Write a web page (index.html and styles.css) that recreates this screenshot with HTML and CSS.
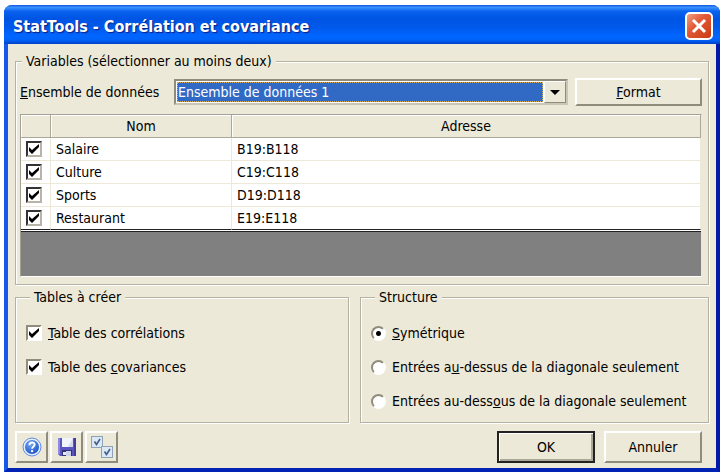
FILE: index.html
```html
<!DOCTYPE html>
<html lang="fr">
<head>
  <meta charset="UTF-8">
  <meta name="viewport" content="width=device-width, initial-scale=1.0">
  <title>StatTools - Corrélation et covariance</title>
  <link rel="stylesheet" href="styles.css">
</head>
<body>
  <form class="window">
    <header class="titlebar">
      <h1>StatTools - Corrélation et covariance</h1>
      <button type="button" class="close" aria-label="Fermer">
        <svg viewBox="0 0 24 24" width="24" height="24"><path d="M6 6L18 18M18 6L6 18"/></svg>
      </button>
    </header>

    <div class="content">
      <fieldset class="variables">
        <legend>Variables (sélectionner au moins deux)</legend>
        <div class="dataset">
          <label for="dataset"><u>E</u>nsemble de données</label>
          <div class="combo">
            <select id="dataset">
              <option>Ensemble de données 1</option>
            </select>
            <span class="arrow"></span>
          </div>
          <button type="button" class="format"><u>F</u>ormat</button>
        </div>
        <div class="grid">
          <table>
            <colgroup>
              <col class="col-check">
              <col class="col-name">
              <col>
            </colgroup>
            <thead>
              <tr><th></th><th>Nom</th><th>Adresse</th></tr>
            </thead>
            <tbody>
              <tr>
                <td><input type="checkbox" id="v1" checked></td>
                <td><label for="v1">Salaire</label></td>
                <td>B19:B118</td>
              </tr>
              <tr>
                <td><input type="checkbox" id="v2" checked></td>
                <td><label for="v2">Culture</label></td>
                <td>C19:C118</td>
              </tr>
              <tr>
                <td><input type="checkbox" id="v3" checked></td>
                <td><label for="v3">Sports</label></td>
                <td>D19:D118</td>
              </tr>
              <tr>
                <td><input type="checkbox" id="v4" checked></td>
                <td><label for="v4">Restaurant</label></td>
                <td>E19:E118</td>
              </tr>
            </tbody>
          </table>
        </div>
      </fieldset>

      <div class="options">
        <fieldset class="choices">
          <legend>Tables à créer</legend>
          <label><input type="checkbox" checked><span><u>T</u>able des corrélations</span></label>
          <label><input type="checkbox" checked><span>Table des <u>c</u>ovariances</span></label>
        </fieldset>
        <fieldset class="choices">
          <legend>Structure</legend>
          <label><input type="radio" name="structure" checked><span><u>S</u>ymétrique</span></label>
          <label><input type="radio" name="structure"><span>Entrées a<u>u</u>-dessus de la diagonale seulement</span></label>
          <label><input type="radio" name="structure"><span>Entrées au-dess<u>o</u>us de la diagonale seulement</span></label>
        </fieldset>
      </div>

      <footer class="actions">
        <button type="button" class="tool" aria-label="Aide">
          <svg viewBox="0 0 20 20" width="20" height="20">
            <defs>
              <radialGradient id="help" cx="40%" cy="30%" r="75%">
                <stop offset="0" stop-color="#6fa8f5"/>
                <stop offset="1" stop-color="#1c4fc4"/>
              </radialGradient>
            </defs>
            <circle cx="10" cy="10" r="9" fill="#e4eefc" stroke="#5c8be0"/>
            <circle cx="10" cy="10" r="7" fill="url(#help)"/>
            <path d="M7.4 8.2C7.4 4.6 12.8 4.8 12.6 7.8C12.5 9.5 10.2 9.6 10.1 11.8" fill="none" stroke="#fff" stroke-width="1.9"/>
            <circle cx="10.1" cy="14.1" r="1.2" fill="#fff"/>
          </svg>
        </button>
        <button type="button" class="tool" aria-label="Enregistrer">
          <svg viewBox="0 0 20 20" width="20" height="20">
            <path d="M1 1H19V19H3L1 17Z" fill="#5a55c0"/>
            <path d="M1 1H3V17H1Z" fill="#8d8be0"/>
            <path d="M17 1H19V19H17Z" fill="#443c9c"/>
            <rect x="5" y="1" width="11" height="9" fill="#f2f4fc"/>
            <path d="M16 1V10H11Z" fill="#d3d8ee"/>
            <rect x="5" y="13" width="10" height="6" fill="#34307c"/>
            <rect x="9" y="14" width="5" height="5" fill="#cfd3ea"/>
            <rect x="6" y="15" width="3" height="3" fill="#e8eaf6"/>
          </svg>
        </button>
        <button type="button" class="tool" aria-label="Tout sélectionner">
          <svg viewBox="0 0 22 22" width="22" height="22">
            <g fill="#dce8f5" stroke="#8fa3b8">
              <rect x=".5" y=".5" width="11" height="11"/>
              <rect x="10.5" y="10.5" width="11" height="11"/>
            </g>
            <path d="M3.5 5.5L5.5 8.5L9 3M13.5 15.5L15.5 18.5L19 13" fill="none" stroke="#3f5f8c" stroke-width="1.6"/>
          </svg>
        </button>
        <button type="submit" class="ok">OK</button>
        <button type="button" class="cancel">Annuler</button>
      </footer>
    </div>
  </form>
</body>
</html>
```
FILE: styles.css
```css
* {
  box-sizing: border-box;
}

body {
  margin: 0;
  padding: 5px 0 0 4px;
  background-color: #fff;
  color: #000;
  font-family: 'DejaVu Sans Condensed', 'DejaVu Sans', sans-serif;
  font-stretch: condensed;
  font-size: 14px;
  line-height: 16px;
}

.window {
  border: 4px solid #0a3fd6;
  border-color: #0831d9 #0019a8 #0023b4 #1658e8;
  border-top: 0;
  border-radius: 8px 8px 0 0;
  background-color: #ece9d8;
}

.titlebar {
  display: flex;
  align-items: center;
  justify-content: space-between;
  height: 39px;
  margin: 0 -4px;
  padding: 0 7px 0 9px;
  border-radius: 8px 8px 0 0;
  background: linear-gradient(#0a56dc 0, #3c93ff 6%, #0a62ee 16%, #0054e3 35%, #0058ea 55%, #0066ff 80%, #0062f8 90%, #0040c8 100%);
}

.titlebar h1 {
  margin: 4px 0 0;
  color: #fff;
  font-size: 16px;
  line-height: 20px;
  text-shadow: 1px 1px 1px #0a1f80;
}

button {
  padding: 0;
  border: 2px solid;
  border-color: #fff #8f8c7c #8f8c7c #fff;
  background-color: #ece9d8;
  color: #000;
  font: inherit;
}

.close {
  display: flex;
  align-items: center;
  justify-content: center;
  width: 28px;
  height: 28px;
  margin-top: 3px;
  border: 2px solid #fff;
  border-radius: 5px;
  background: linear-gradient(135deg, #f0a084, #e25a37 40%, #c93a12);
}

.close path {
  fill: none;
  stroke: #fff;
  stroke-width: 3;
}

.content {
  padding: 9px 7px 5px;
}

fieldset {
  min-width: 0;
  margin: 0;
  border: 1px solid #b5b2a2;
  box-shadow: 1px 1px 0 #fff, inset 1px 1px 0 #fff;
}

legend {
  padding: 0 4px;
  background-color: #ece9d8;
}

.variables {
  padding: 9px 6px 7px 4px;
}

.variables legend {
  margin-left: 2px;
}

.dataset {
  display: flex;
  align-items: center;
  margin-bottom: 8px;
}

.dataset label {
  width: 154px;
}

.combo {
  display: flex;
  flex: 1;
  height: 26px;
  border: 2px solid;
  border-color: #8f8c7c #c9c6b6 #c9c6b6 #8f8c7c;
  background-color: #fff;
}

.combo select {
  flex: 1;
  min-width: 0;
  margin: 1px;
  padding: 0;
  appearance: none;
  border: 1px dotted #d8b060;
  border-radius: 0;
  outline: none;
  background-color: #316ac5;
  color: #fff;
  font: inherit;
}

.arrow {
  display: flex;
  align-items: center;
  justify-content: center;
  width: 22px;
  border: 1px solid;
  border-color: #fff #8f8c7c #8f8c7c #fff;
  background-color: #ece9d8;
  pointer-events: none;
}

.arrow::before {
  content: '';
  border: 5px solid transparent;
  border-top-color: #000;
  border-bottom: 0;
}

.format {
  width: 127px;
  height: 28px;
  margin-left: 7px;
}

.grid {
  min-height: 163px;
  border: 1px solid;
  border-color: #a5a295 #ece9d8 #fff #a5a295;
  background-color: #808080;
}

table {
  width: 100%;
  table-layout: fixed;
  border-spacing: 0;
  border-bottom: 2px solid #222;
  background-color: #fff;
}

.col-check {
  width: 30px;
}

.col-name {
  width: 181px;
}

th {
  height: 23px;
  padding: 0;
  border-right: 1px solid #aca899;
  border-bottom: 1px solid #aca899;
  background-color: #ece9d8;
  box-shadow: inset 1px 1px 0 #fff;
  font-weight: normal;
}

td {
  height: 23px;
  padding: 0 0 0 5px;
  border-right: 1px solid #ece9d8;
  border-bottom: 1px solid #ece9d8;
}

tr:last-child td {
  border-bottom-color: #222;
  box-shadow: 0 1px 0 #fff;
}

input {
  flex: none;
  display: block;
  width: 16px;
  height: 16px;
  margin: 0;
  appearance: none;
}

input[type="checkbox"] {
  border: 2px solid;
  border-color: #8f8c7c #fff #fff #8f8c7c;
  background-color: #fff;
}

input[type="checkbox"]:checked {
  background-image: url("data:image/svg+xml,%3Csvg xmlns='http://www.w3.org/2000/svg' viewBox='0 0 12 12'%3E%3Cpath d='M1 4L4 7L11 1V4L4 11L1 8Z'/%3E%3C/svg%3E");
}

td input[type="checkbox"] {
  border-color: #333 #b8b5a8 #b8b5a8 #333;
}

input[type="radio"] {
  width: 15px;
  height: 15px;
  border: 2px solid;
  border-color: #8f8c7c #fff #fff #8f8c7c;
  border-radius: 50%;
  background-color: #fff;
}

input[type="radio"]:checked {
  background-image: radial-gradient(circle, #000 0, #000 2px, transparent 3px);
}

.options {
  display: grid;
  grid-template-columns: 334fr 349fr;
  gap: 11px;
  margin-top: 4px;
}

.choices {
  display: flex;
  flex-direction: column;
  gap: 18px;
  padding: 20px 10px 13px;
}

.choices legend {
  margin-left: 4px;
}

.choices label {
  display: flex;
  align-items: center;
  gap: 6px;
  white-space: nowrap;
}

.actions {
  display: flex;
  gap: 2px;
  margin-top: 8px;
  padding-right: 7px;
}

.actions button {
  height: 32px;
}

.actions .tool {
  display: flex;
  align-items: center;
  justify-content: center;
  width: 33px;
}

.actions .ok {
  width: 98px;
  margin-left: auto;
  border-color: #222;
  box-shadow: inset 1px 1px 0 #fff, inset -2px -2px 0 #aca899;
}

.actions .cancel {
  width: 98px;
  margin-left: 7px;
}
```
